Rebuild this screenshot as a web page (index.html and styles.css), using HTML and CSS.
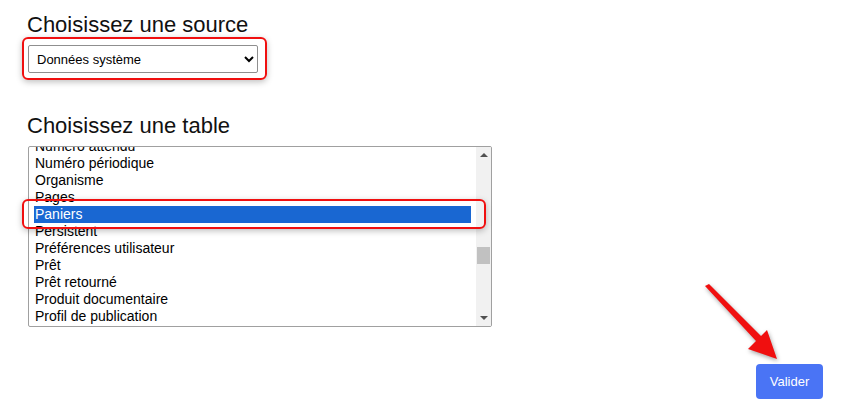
FILE: index.html
```html
<!DOCTYPE html>
<html lang="fr">
<head>
    <meta charset="UTF-8">
    <title>Choix de la source</title>
    <link rel="stylesheet" href="styles.css">
</head>
<body>
<div class="page">
    <h2 class="field-title">Choisissez une source</h2>
    <select class="source-select" id="source">
        <option>Données système</option>
        <option>Données utilisateur</option>
    </select>

    <h2 class="field-title table-title">Choisissez une table</h2>
    <div class="listbox">
        <ul class="listbox-items">
            <li>Numéro attendu</li>
            <li>Numéro périodique</li>
            <li>Organisme</li>
            <li>Pages</li>
            <li class="selected">Paniers</li>
            <li>Persistent</li>
            <li>Préférences utilisateur</li>
            <li>Prêt</li>
            <li>Prêt retourné</li>
            <li>Produit documentaire</li>
            <li>Profil de publication</li>
        </ul>
        <div class="scrollbar">
            <span class="arrow up"></span>
            <span class="thumb"></span>
            <span class="arrow down"></span>
        </div>
    </div>

    <div class="actions">
        <button class="btn-primary" type="button">Valider</button>
    </div>
</div>

<!-- annotations drawn over the screenshot -->
<div class="mark mark-source"></div>
<div class="mark mark-table"></div>
<svg class="pointer" width="864" height="419" viewBox="0 0 864 419">
    <polygon points="705,286 756,341 748,349 777,359 767,330 761,336 709,284" fill="#f00f0f"/>
</svg>
</body>
</html>
```

FILE: styles.css
```css
body {
    margin: 0;
    font-family: "Liberation Sans", Arial, sans-serif;
    color: #111;
    background-color: #fff;
}
.page {
    padding: 12px 41px 0 28px;
}
.field-title {
    margin: 0 0 8px -1px;
    font-size: 22px;
    font-weight: normal;
    line-height: 25px;
}
.table-title {
    margin-top: 40px;
    margin-bottom: 8px;
}
.source-select {
    display: block;
    width: 230px;
    height: 28px;
    padding: 0 4px;
    font-family: "Liberation Sans", Arial, sans-serif;
    font-size: 13px;
    color: #000;
    background-color: #fff;
    border: 1px solid #8f8f8f;
    border-radius: 2px;
}
.listbox {
    display: flex;
    width: 462px;
    height: 179px;
    border: 1px solid #a0a0a0;
    border-radius: 2px;
    overflow: hidden;
}
.listbox-items {
    flex: 1;
    margin: -9px 0 0;
    padding: 0 5px;
    list-style: none;
    font-size: 14px;
    line-height: 17px;
    color: #000;
}
.listbox-items li {
    padding-left: 1px;
    height: 17px;
}
.listbox-items li.selected {
    background-color: #1967d2;
    color: #fff;
}
.scrollbar {
    position: relative;
    width: 15px;
    background-color: #f1f1f1;
}
.arrow {
    position: absolute;
    left: 4px;
    width: 0;
    height: 0;
    border-left: 4px solid transparent;
    border-right: 4px solid transparent;
}
.arrow.up {
    top: 6px;
    border-bottom: 4px solid #505050;
}
.arrow.down {
    bottom: 6px;
    border-top: 4px solid #505050;
}
.thumb {
    position: absolute;
    top: 100px;
    left: 1px;
    width: 13px;
    height: 17px;
    background-color: #c1c1c1;
}
.actions {
    display: flex;
    justify-content: flex-end;
    margin-top: 37px;
}
.btn-primary {
    width: 67px;
    height: 35px;
    font-family: "Liberation Sans", Arial, sans-serif;
    font-size: 13px;
    color: #fff;
    background-color: #4a74f5;
    border: none;
    border-radius: 4px;
}
.mark {
    position: absolute;
    border: 2px solid #f01010;
    border-radius: 6px;
    box-shadow: 0 2px 6px rgba(0, 0, 0, 0.25);
}
.mark-source {
    left: 22px;
    top: 37px;
    width: 241px;
    height: 39px;
}
.mark-table {
    left: 22px;
    top: 199px;
    width: 460px;
    height: 26px;
}
.pointer {
    position: absolute;
    left: 0;
    top: 0;
    pointer-events: none;
    filter: drop-shadow(1px 2px 2px rgba(0, 0, 0, 0.35));
}
```
